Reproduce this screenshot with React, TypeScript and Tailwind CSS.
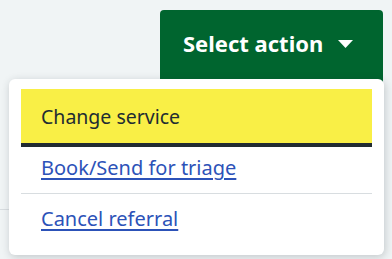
export default function App() {
  return (
    <div className="relative h-[259px] overflow-hidden bg-[#f0f4f5] font-['Noto_Sans',sans-serif]">
      <div className="flex justify-end pr-[9px] pt-[10px]">
        <button className="flex h-[80px] w-[223px] items-start gap-[15px] rounded-[4px] bg-[#00652f] pl-[23px] pt-[17px] text-[22px] font-bold leading-[32px] text-white">
          <span>Select action</span>
          <svg width="15" height="8" viewBox="0 0 15 8" className="mt-[13px]">
            <path d="M0 0h15L7.5 8z" fill="#fff" />
          </svg>
        </button>
      </div>

      <div className="absolute left-0 top-[209px] h-px w-[100px] bg-[#d8dde0]" />

      {/* dropdown */}
      <div className="absolute left-[9px] top-[79px] w-[375px] rounded-[6px] bg-white px-[12px] pb-[11px] pt-[10px] shadow-[1px_2px_8px_rgba(33,43,50,0.22)]">
        <div className="flex h-[58px] items-center border-b-4 border-[#212b32] bg-[#f9ef46] px-[20px] pt-px text-[19.5px] text-[#212b32]">
          Change service
        </div>
        <div className="flex h-[46px] items-center px-[20px] pb-[4px]">
          <a href="#" className="text-[20px] text-[#2c52b8] underline underline-offset-[3px]">
            Book/Send for triage
          </a>
        </div>
        <div className="flex h-[51px] items-center border-t border-[#d8dde0] px-[20px]">
          <a href="#" className="text-[20px] text-[#2c52b8] underline underline-offset-[3px]">
            Cancel referral
          </a>
        </div>
      </div>
    </div>
  );
}
